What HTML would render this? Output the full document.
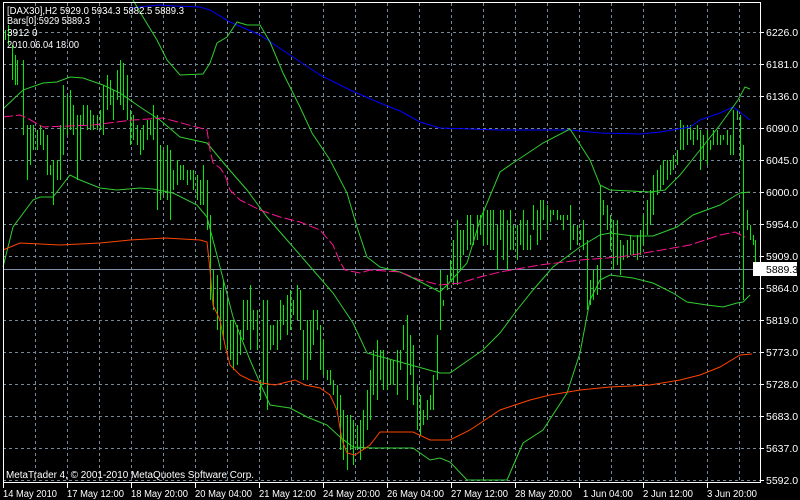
<!DOCTYPE html>
<html><head><meta charset="utf-8"><style>
html,body{margin:0;padding:0;background:#000;}
body{width:800px;height:500px;overflow:hidden;position:relative;font-family:"Liberation Sans",sans-serif;}
svg{position:absolute;left:0;top:0;}
</style></head><body>
<svg width="800" height="500" viewBox="0 0 800 500" xmlns="http://www.w3.org/2000/svg">
<rect width="800" height="500" fill="#000"/>
<g stroke="#778899" stroke-width="1" stroke-dasharray="3,3" fill="none">
<path d="M35.5 3V482M67.5 3V482M99.5 3V482M131.5 3V482M163.5 3V482M195.5 3V482M227.5 3V482M259.5 3V482M291.5 3V482M323.5 3V482M355.5 3V482M387.5 3V482M419.5 3V482M451.5 3V482M483.5 3V482M515.5 3V482M547.5 3V482M579.5 3V482M611.5 3V482M643.5 3V482M675.5 3V482M707.5 3V482M739.5 3V482"/>
<path d="M3 32.5H760M3 64.5H760M3 96.5H760M3 128.5H760M3 160.5H760M3 192.5H760M3 224.5H760M3 256.5H760M3 288.5H760M3 320.5H760M3 352.5H760M3 384.5H760M3 416.5H760M3 448.5H760M3 480.5H760"/>
</g>
<line x1="3" y1="269.5" x2="760" y2="269.5" stroke="#8090a8" stroke-width="1"/>
<path stroke="#00ee00" stroke-width="1" fill="none" d="M5.5 30V40M8.5 25V45M12.5 45V80M15.5 55V85M17.5 60V85M23.5 60V135M27.5 125V180M30.5 125V165M33.5 125V150M37.5 130V150M40.5 125V145M43.5 130V150M47.5 135V175M50.5 165V175M53.5 160V205M57.5 160V180M60.5 125V180M63.5 85V155M67.5 95V135M70.5 90V130M73.5 105V135M77.5 115V180M80.5 115V160M83.5 105V125M87.5 105V130M90.5 110V130M93.5 115V130M97.5 115V130M100.5 110V130M103.5 85V135M107.5 75V110M110.5 80V105M113.5 90V120M117.5 70V100M120.5 60V105M123.5 63V110M127.5 75V120M130.5 110V145M133.5 115V140M137.5 125V145M140.5 130V155M143.5 125V150M147.5 120V140M150.5 120V135M153.5 105V140M157.5 115V210M160.5 145V200M163.5 150V195M167.5 145V200M170.5 150V220M173.5 170V190M177.5 160V185M180.5 165V180M183.5 165V180M187.5 170V185M190.5 170V180M193.5 170V190M197.5 175V200M200.5 180V205M203.5 165V205M207.5 180V230M210.5 215V300M213.5 270V310M217.5 275V330M220.5 290V350M223.5 280V340M227.5 300V350M230.5 320V360M233.5 320V370M237.5 325V365M240.5 330V355M243.5 300V340M247.5 300V330M250.5 285V350M253.5 310V330M257.5 310V350M260.5 380V400M263.5 300V385M267.5 300V410M270.5 325V350M273.5 325V345M277.5 320V350M280.5 300V340M283.5 305V325M287.5 295V335M290.5 290V330M293.5 300V315M297.5 285V320M300.5 290V330M303.5 330V380M307.5 320V380M310.5 320V360M313.5 310V345M317.5 310V330M320.5 325V370M323.5 340V375M327.5 370V380M330.5 370V385M333.5 380V395M337.5 385V410M340.5 395V450M343.5 410V460M347.5 415V470M350.5 415V450M353.5 420V465M357.5 425V450M360.5 420V460M363.5 410V450M367.5 390V430M370.5 370V420M373.5 350V395M377.5 340V400M380.5 350V380M383.5 350V390M387.5 360V390M390.5 360V385M393.5 360V385M397.5 350V395M400.5 350V370M403.5 325V350M407.5 315V400M410.5 335V375M413.5 345V405M417.5 385V430M420.5 395V435M423.5 410V425M427.5 400V420M430.5 395V410M433.5 375V410M437.5 335V380M440.5 270V330M443.5 300V306M447.5 275V290M450.5 260V280M453.5 240V285M457.5 220V285M460.5 230V270M463.5 230V255M467.5 215V250M470.5 215V245M473.5 225V245M477.5 215V240M480.5 215V235M483.5 210V245M487.5 210V245M490.5 210V250M493.5 210V250M497.5 225V270M500.5 210V240M503.5 210V260M507.5 220V270M510.5 210V250M513.5 225V250M517.5 225V260M520.5 220V245M523.5 210V250M527.5 220V250M530.5 235V250M533.5 205V230M537.5 210V245M540.5 200V240M543.5 200V220M547.5 205V230M550.5 210V222M553.5 210V215M557.5 210V220M560.5 215V220M563.5 215V230M567.5 215V220M570.5 205V250M573.5 225V240M577.5 225V245M580.5 230V240M583.5 220V250M587.5 240V310M590.5 280V305M593.5 270V300M597.5 265V295M600.5 185V290M603.5 200V215M607.5 205V230M610.5 215V250M613.5 220V270M617.5 220V265M620.5 240V275M623.5 245V260M627.5 240V258M630.5 235V255M633.5 240V255M637.5 235V260M640.5 230V255M643.5 215V245M647.5 200V235M650.5 190V225M653.5 175V215M657.5 170V195M660.5 165V190M663.5 160V185M667.5 160V180M670.5 160V175M673.5 155V170M677.5 150V165M680.5 120V150M683.5 125V150M687.5 125V145M690.5 125V140M693.5 130V145M697.5 125V140M700.5 130V170M703.5 135V160M707.5 130V165M710.5 140V150M713.5 130V145M717.5 130V145M720.5 135V145M723.5 135V140M727.5 130V145M730.5 135V155M733.5 110V155M737.5 110V120M740.5 115V160M743.5 145V300M747.5 210V230M750.5 225V240M753.5 235V245M755.5 240V275"/>
<g fill="none" stroke-width="1">
<polyline stroke="#0000ff" points="130,8 160,5 175,6 200,7 210,10 230,22 260,35 290,55 320,75 350,90 380,103 400,111 420,122 440,128 500,130 570,130 600,133 640,134 660,132 690,127 700,120 720,113 733,107 740,112 750,120"/>
<polyline stroke="#32cd32" points="133,0 143,17 157,40 167,60 180,75 203,74 210,63 217,43 227,37 237,22 247,25 260,25 270,42 283,73 300,107 312,133 330,160 347,193 357,227 367,257 380,267 400,272 413,278 440,292 447,285 467,263 480,220 500,172 513,163 543,143 570,129 590,160 600,185 610,190 650,192 665,190 680,175 700,150 720,125 738,100 745,87 750,89"/>
<polyline stroke="#32cd32" points="3,109 23,90 43,83 57,82 70,77 83,78 103,85 120,93 140,107 160,120 180,137 207,143 227,167 247,190 267,217 287,240 307,263 333,293 353,323 367,353 400,362 440,373 450,373 483,350 500,333 517,310 533,290 553,267 580,247 600,235 610,233 633,236 653,236 677,227 693,215 720,205 733,197 740,193 750,192"/>
<polyline stroke="#32cd32" points="3,267 13,227 33,200 40,197 53,197 70,175 80,180 100,188 117,190 140,188 153,189 173,193 197,205 207,217 220,267 233,317 250,360 260,383 270,405 290,408 307,417 327,425 340,437 353,447 373,448 413,448 430,460 440,458 450,462 467,480 507,480 523,443 543,430 567,393 580,353 590,300 600,280 610,275 633,278 653,283 673,293 687,302 707,305 723,307 737,303 743,302 750,295"/>
<polyline stroke="#ff4500" points="3,250 20,243 60,245 100,243 130,240 165,238 200,240 207,242 210,270 213,305 220,320 225,345 230,365 240,375 250,380 262,383 275,385 295,380 305,385 320,388 330,395 337,410 342,440 347,453 355,455 370,445 380,432 413,432 430,440 450,440 470,430 500,410 530,400 550,395 580,390 610,387 650,385 680,380 700,375 720,367 740,355 752,354"/>
<polyline stroke="#ff1493" stroke-dasharray="10,3" points="3,117 20,115 27,118 43,127 93,125 133,120 163,118 200,128 207,130 210,150 213,163 220,168 225,175 230,190 240,200 260,210 280,217 300,222 320,230 333,245 340,262 345,270 360,273 370,270 400,272 420,280 440,285 460,283 480,277 500,272 540,265 580,260 620,257 650,252 690,245 720,235 735,232 745,237"/>
</g>
<rect x="3.5" y="2.5" width="757" height="480" fill="none" stroke="#fff" stroke-width="1"/>
<g stroke="#fff"><path d="M3.5 483V488M67.5 483V488M131.5 483V488M195.5 483V488M259.5 483V488M323.5 483V488M387.5 483V488M451.5 483V488M515.5 483V488M579.5 483V488M643.5 483V488M707.5 483V488"/>
<path d="M761 32.5H764M761 64.5H764M761 96.5H764M761 128.5H764M761 160.5H764M761 192.5H764M761 224.5H764M761 256.5H764M761 288.5H764M761 320.5H764M761 352.5H764M761 384.5H764M761 416.5H764M761 448.5H764M761 480.5H764"/></g>
<rect x="753" y="262" width="44" height="14" fill="#fff"/>
<g font-family="Liberation Sans, sans-serif" font-size="10" fill="#fff" lengthAdjust="spacingAndGlyphs">
<text x="7" y="14" textLength="177" lengthAdjust="spacingAndGlyphs">[DAX30],H2  5929.0 5934.3 5882.5 5889.3</text>
<text x="7" y="24" textLength="83" lengthAdjust="spacingAndGlyphs">Bars[0]:5929 5889.3</text>
<text x="7" y="36">3912 0</text>
<text x="7" y="48" textLength="72" lengthAdjust="spacingAndGlyphs">2010.06.04 18:00</text>
<text x="6" y="478" textLength="248" lengthAdjust="spacingAndGlyphs">MetaTrader 4, © 2001-2010 MetaQuotes Software Corp.</text>
<g font-size="10.5">
<text x="766" y="36">6226.0</text><text x="766" y="68">6181.0</text><text x="766" y="100">6136.0</text><text x="766" y="132">6090.0</text><text x="766" y="164">6045.0</text><text x="766" y="196">6000.0</text><text x="766" y="228">5954.0</text><text x="766" y="260">5909.0</text><text x="766" y="292">5864.0</text><text x="766" y="324">5819.0</text><text x="766" y="356">5773.0</text><text x="766" y="388">5728.0</text><text x="766" y="420">5683.0</text><text x="766" y="452">5637.0</text><text x="766" y="484">5592.0</text>
<text x="766" y="273" fill="#000">5889.3</text>
</g>
<text x="3" y="497" textLength="54" lengthAdjust="spacingAndGlyphs">14 May 2010</text>
<text x="67" y="497" textLength="57" lengthAdjust="spacingAndGlyphs">17 May 12:00</text>
<text x="131" y="497" textLength="57" lengthAdjust="spacingAndGlyphs">18 May 20:00</text>
<text x="195" y="497" textLength="57" lengthAdjust="spacingAndGlyphs">20 May 04:00</text>
<text x="259" y="497" textLength="57" lengthAdjust="spacingAndGlyphs">21 May 12:00</text>
<text x="323" y="497" textLength="57" lengthAdjust="spacingAndGlyphs">24 May 20:00</text>
<text x="387" y="497" textLength="57" lengthAdjust="spacingAndGlyphs">26 May 04:00</text>
<text x="451" y="497" textLength="57" lengthAdjust="spacingAndGlyphs">27 May 12:00</text>
<text x="515" y="497" textLength="57" lengthAdjust="spacingAndGlyphs">28 May 20:00</text>
<text x="583" y="497" textLength="50" lengthAdjust="spacingAndGlyphs">1 Jun 04:00</text>
<text x="643" y="497" textLength="50" lengthAdjust="spacingAndGlyphs">2 Jun 12:00</text>
<text x="707" y="497" textLength="50" lengthAdjust="spacingAndGlyphs">3 Jun 20:00</text>
</g>
</svg>
</body></html>
